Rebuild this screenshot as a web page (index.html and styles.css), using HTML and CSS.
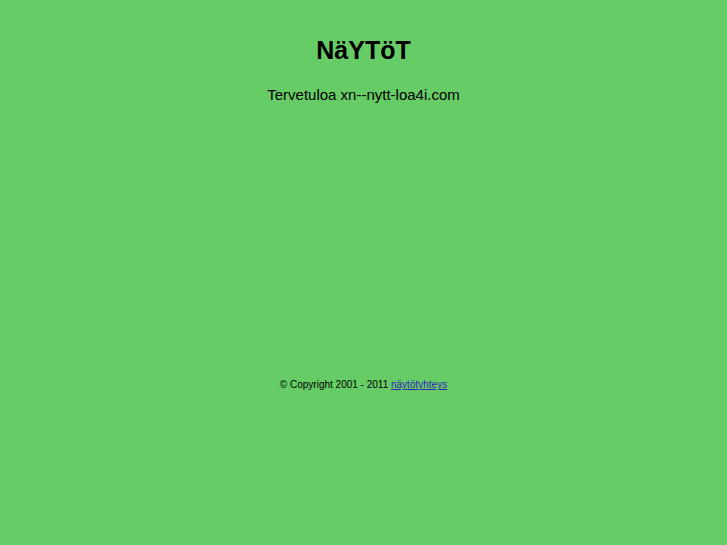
FILE: index.html
```html
<!DOCTYPE html>
<html lang="fi">
<head>
    <meta charset="UTF-8">
    <meta name="viewport" content="width=device-width, initial-scale=1.0">
    <title>NäYTöT</title>
    <link rel="stylesheet" href="styles.css">
</head>
<body>

    <main class="welcome">
        <h1>NäYTöT</h1>
        <p>Tervetuloa xn--nytt-loa4i.com</p>
    </main>

    <footer class="copyright">
        &copy; Copyright 2001 - 2011 <a href="#">näytötyhteys</a>
    </footer>

</body>
</html>
```
FILE: styles.css
```css
body {
    margin: 0;
    padding: 34px 8px;
    background-color: #66cc66;
    color: #000;
    font-family: Arial, "Liberation Sans", sans-serif;
    text-align: center;
}

h1 {
    margin: 0 0 19px;
    font-size: 25px;
    line-height: 32px;
}

p {
    margin: 0;
    font-size: 15px;
    line-height: 20px;
}

.copyright {
    margin-top: 273px;
    font-size: 10px;
    line-height: 14px;
}

.copyright a {
    color: #3322bb;
}
```
